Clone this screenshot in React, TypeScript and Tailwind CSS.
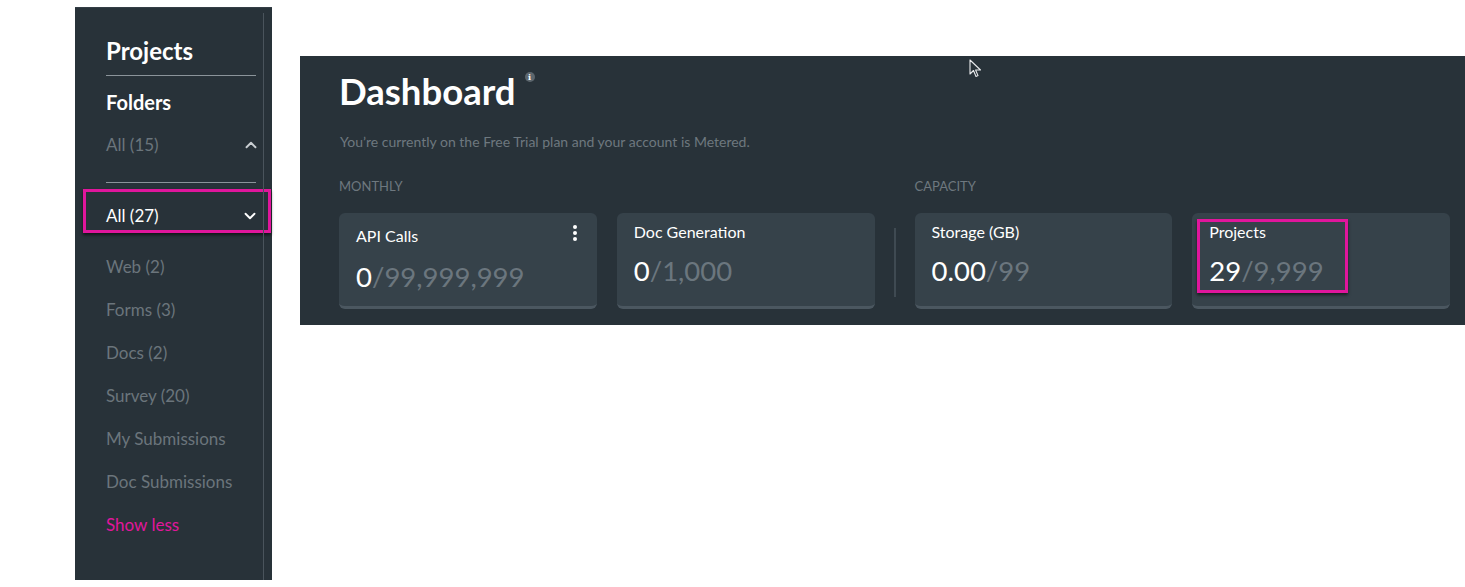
import { ChevronDown, ChevronUp } from "lucide-react";

const FOLDERS = ["Web (2)", "Forms (3)", "Docs (2)", "Survey (20)", "My Submissions", "Doc Submissions"];

function Sidebar() {
  return (
    <aside className="mt-[7px] flex h-[573px] w-[197px] shrink-0 border-t border-[#343e46] bg-[#283239]">
      <div className="flex flex-1 flex-col pl-[31px] pr-[7px]">
        {/* Projects header */}
        <h2 className="mt-[28px] text-[24px] font-bold leading-[29px] text-white">Projects</h2>
        <div className="mt-[10px] h-px bg-[#8b949a]" />

        <h3 className="mt-[14px] text-[20px] font-bold leading-[24px] text-white">Folders</h3>
        <div className="mt-[19px] flex h-[24px] items-center justify-between text-[17px] text-[#6b757c]">
          <span>All (15)</span>
          <ChevronUp className="mr-[-4px] h-[18px] w-[18px] text-[#c9ced2]" strokeWidth={2.5} />
        </div>
        <div className="mt-[25px] h-px bg-[#8b949a]" />

        {/* Selected folder (highlighted) */}
        <div className="ml-[-23px] mr-[-15px] mt-[6px] flex h-[44px] items-center justify-between border-[3px] border-[#e0169c] pl-[20px] pr-[9px] pt-[9px] shadow-[0_2px_3px_rgba(0,0,0,0.6)]">
          <span className="text-[17px] text-white">All (27)</span>
          <ChevronDown className="h-[18px] w-[18px] text-white" strokeWidth={2.5} />
        </div>

        <ul className="mt-[12px] flex flex-col">
          {FOLDERS.map((f) => (
            <li key={f} className="flex h-[43px] items-center text-[17px] text-[#6b757c]">
              {f}
            </li>
          ))}
          <li className="flex h-[43px] items-center text-[17px] text-[#e0169c]">Show less</li>
        </ul>
      </div>
      <div className="mt-[5px] w-px bg-[#4a545c]" />
      <div className="w-[8px]" />
    </aside>
  );
}

type Stat = { title: string; used: string; limit: string; menu?: boolean; marked?: boolean };

function StatCard({ stat }: { stat: Stat }) {
  return (
    <div className="relative h-[96px] rounded-[6px] border-b-[3px] border-[#4b5760] bg-[#36424a] pl-[17px]">
      <div className={`${stat.menu ? "pt-[13px]" : "pt-[9px]"} text-[16px] leading-[20px] text-white`}>{stat.title}</div>
      <div className={`${stat.menu ? "mt-[16px]" : "mt-[14px]"} text-[27.5px] leading-[30px]`}>
        <span className="text-white">{stat.used}</span>
        <span className="text-[#6b767e]">/{stat.limit}</span>
      </div>
      {stat.menu && (
        <div className="absolute right-[20px] top-[12px] flex flex-col gap-[2px]">
          <span className="h-[4px] w-[4px] rounded-full bg-white" />
          <span className="h-[4px] w-[4px] rounded-full bg-white" />
          <span className="h-[4px] w-[4px] rounded-full bg-white" />
        </div>
      )}
      {stat.marked && (
        <div className="absolute left-[5px] top-[6px] h-[74px] w-[151px] border-[3px] border-[#e0169c] shadow-[0_2px_3px_rgba(0,0,0,0.6)]" />
      )}
    </div>
  );
}

function Dashboard() {
  const monthly: Stat[] = [
    { title: "API Calls", used: "0", limit: "99,999,999", menu: true },
    { title: "Doc Generation", used: "0", limit: "1,000" },
  ];
  const capacity: Stat[] = [
    { title: "Storage (GB)", used: "0.00", limit: "99" },
    { title: "Projects", used: "29", limit: "9,999", marked: true },
  ];

  return (
    <section className="ml-[28px] mt-[56px] h-[269px] flex-1 bg-[#283239] pl-[39px] pr-[15px]">
      <div className="flex items-start pt-[13px]">
        <h1 className="text-[36.5px] font-bold leading-[44px] text-white">Dashboard</h1>
        <span className="ml-[9px] mt-[3px] flex h-[10px] w-[10px] items-center justify-center rounded-full bg-[#5c666d] font-['DejaVu_Serif',serif] text-[8px] font-bold leading-none text-white">
          i
        </span>
      </div>
      <p className="mt-[20px] pl-px text-[14px] leading-[18px] text-[#6e787f]">
        You’re currently on the Free Trial plan and your account is Metered.
      </p>

      <div className="mt-[27px] flex">
        <div className="flex-1">
          <div className="text-[13px] uppercase leading-[16px] text-[#6e787f]">Monthly</div>
          <div className="mt-[19px] grid grid-cols-2 gap-[20px]">
            {monthly.map((s) => (
              <StatCard key={s.title} stat={s} />
            ))}
          </div>
        </div>

        <div className="mx-[19px] mb-[12px] mt-[50px] w-[2px] bg-[#3f4a52]" />

        <div className="flex-1">
          <div className="text-[13px] uppercase leading-[16px] text-[#6e787f]">Capacity</div>
          <div className="mt-[19px] grid grid-cols-2 gap-[20px]">
            {capacity.map((s) => (
              <StatCard key={s.title} stat={s} />
            ))}
          </div>
        </div>
      </div>
    </section>
  );
}

export default function App() {
  return (
    <div className="relative flex h-[587px] w-full overflow-hidden bg-white pl-[75px] font-['Lato',sans-serif]">
      <Sidebar />
      <Dashboard />

      {/* mouse cursor */}
      <svg className="absolute left-[969px] top-[59px]" width="13" height="20" viewBox="0 0 13 20">
        <path d="M1 1 L1 15 L4.5 11.5 L7 17.5 L9 16.6 L6.6 11 L11.5 11 Z" fill="#283239" stroke="#e8eaec" strokeWidth="1.1" strokeLinejoin="round" />
      </svg>
    </div>
  );
}
